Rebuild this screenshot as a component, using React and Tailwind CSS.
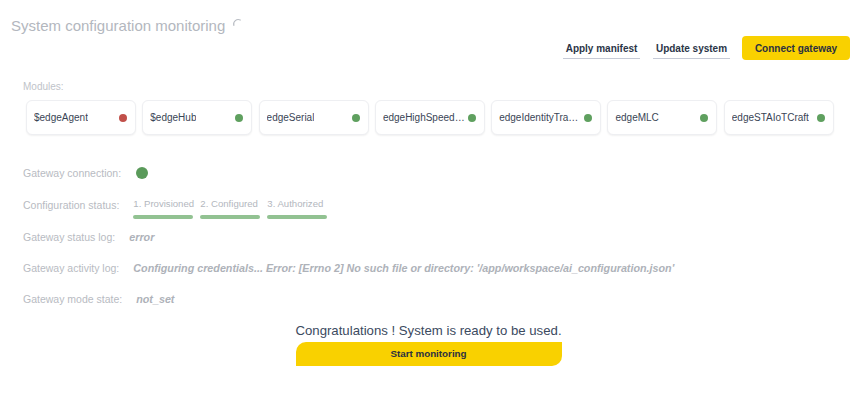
import React from "react";

const modules = [
  { name: "$edgeAgent", ok: false },
  { name: "$edgeHub", ok: true },
  { name: "edgeSerial", ok: true },
  { name: "edgeHighSpeedDataLogger", ok: true },
  { name: "edgeIdentityTranslator", ok: true },
  { name: "edgeMLC", ok: true },
  { name: "edgeSTAIoTCraft", ok: true },
];

const font = { fontFamily: '"Liberation Sans", Arial, sans-serif' };

function Row({ label, children, gap = "gap-[12px]" }) {
  return (
    <div className={`flex items-center ${gap}`}>
      <span className="text-[10.5px] text-[#b8bbc2] leading-none">{label}</span>
      {children}
    </div>
  );
}

export default function App() {
  return (
    <div className="w-[857px] h-[393px] bg-white overflow-hidden" style={font}>
      <div className="pl-[11px] pt-[17px] flex items-center gap-[7px]">
        <span className="text-[15px] leading-[17px] text-[#b3b7be]">System configuration monitoring</span>
        <svg width="11" height="11" viewBox="0 0 12 12" className="mt-[-4px]">
          <path d="M2 8 A5 5 0 0 1 9 2.2" fill="none" stroke="#b8bcc3" strokeWidth="1.3" strokeLinecap="round" />
        </svg>
      </div>
      <div className="flex justify-end items-center pr-[7px] mt-[2px] gap-[12px]">
        <button className="w-[77px] h-[22px] text-[10px] font-bold text-[#2b3547] border-b border-[#c6cad6] pt-[1px]">Apply manifest</button>
        <button className="w-[77px] h-[22px] text-[10px] font-bold text-[#2b3547] border-b border-[#c6cad6] pt-[1px] ml-[1px]">Update system</button>
        <button className="w-[108px] h-[24px] text-[10px] font-bold text-[#2b3040] bg-[#f9d100] rounded-[4px]">Connect gateway</button>
      </div>
      <div className="pl-[23px] mt-[22px] text-[10px] leading-none text-[#c0c3c9]">Modules:</div>
      <div className="flex gap-[6.3px] pl-[26px] mt-[8px]">
        {modules.map((m) => (
          <div key={m.name} className="w-[110px] h-[35px] rounded-[6px] border border-[#eeeff2] bg-white shadow-[0_1px_2px_rgba(0,0,0,0.06)] flex items-center justify-between pl-[7px] pr-[8px]">
            <span className="text-[10px] text-[#3a4556] truncate max-w-[82px]">{m.name}</span>
            <span className={`w-[8px] h-[8px] rounded-full shrink-0 ${m.ok ? "bg-[#5fa05f]" : "bg-[#c1504a]"}`} />
          </div>
        ))}
      </div>
      <div className="pl-[23px] mt-[32px] flex flex-col gap-0">
        <Row label="Gateway connection:" gap="gap-[15px]">
          <span className="w-[12px] h-[12px] rounded-full bg-[#5a9a5a]" />
        </Row>
        <div className="flex items-start gap-[14px] mt-[18px]">
          <span className="text-[10.5px] text-[#b8bbc2] leading-none mt-[3px]">Configuration status:</span>
          <div className="flex gap-[7px] mt-[2px]">
            {["1. Provisioned", "2. Configured", "3. Authorized"].map((s) => (
              <div key={s} className="flex flex-col w-[60px]">
                <span className="text-[9.6px] text-[#b3b7be] leading-none whitespace-nowrap">{s}</span>
                <span className="mt-[6px] h-[4px] rounded-full bg-[#92c292]" />
              </div>
            ))}
          </div>
        </div>
        <div className="mt-[13px]">
          <Row label="Gateway status log:" gap="gap-[14px]">
            <span className="text-[10.75px] font-bold italic text-[#aeb2b9] leading-none">error</span>
          </Row>
        </div>
        <div className="mt-[21px]">
          <Row label="Gateway activity log:" gap="gap-[14px]">
            <span className="text-[10.75px] font-bold italic text-[#aeb2b9] leading-none">Configuring credentials... Error: [Errno 2] No such file or directory: '/app/workspace/ai_configuration.json'</span>
          </Row>
        </div>
        <div className="mt-[20px]">
          <Row label="Gateway mode state:" gap="gap-[14px]">
            <span className="text-[10.75px] font-bold italic text-[#aeb2b9] leading-none">not_set</span>
          </Row>
        </div>
      </div>
      <div className="flex flex-col items-center mt-[18px]">
        <div className="text-[13.2px] leading-[15px] text-[#3b4a60]">Congratulations ! System is ready to be used.</div>
        <button className="mt-[4px] w-[266px] h-[24px] bg-[#f9d100] rounded-tl-[10px] rounded-br-[10px] text-[9.8px] font-bold text-[#2b3040]">Start monitoring</button>
      </div>
    </div>
  );
}
